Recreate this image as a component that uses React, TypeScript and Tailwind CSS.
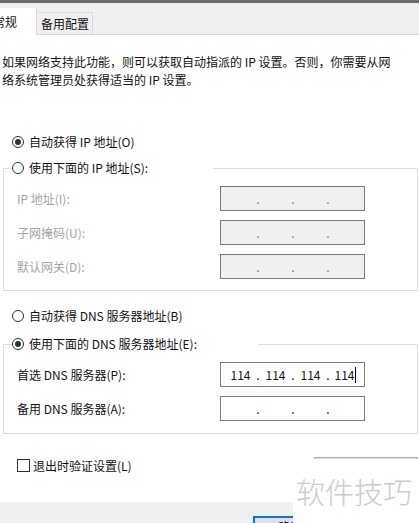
import React from "react";

const FONT = "font-['Noto_Sans_CJK_SC','Noto_Sans',sans-serif]";

function Radio({ checked }: { checked?: boolean }) {
  return (
    <svg width="12" height="12" viewBox="0 0 12 12" className="shrink-0">
      <circle cx="6" cy="6" r="5.5" fill="#fff" stroke="#333" strokeWidth="1" />
      {checked && <circle cx="6" cy="6" r="3" fill="#333" />}
    </svg>
  );
}

function RadioRow({ label, checked }: { label: string; checked?: boolean }) {
  return (
    <div className="flex items-center h-[20px] pl-[12px] gap-[5px]">
      <Radio checked={checked} />
      <span className="text-[12px] leading-[20px] text-[#111]">{label}</span>
    </div>
  );
}

// group box header: line — radio label — line
function GroupHead({ label, checked, wide }: { label: string; checked?: boolean; wide?: boolean }) {
  return (
    <div className="flex h-[20px]">
      <div className="w-[9px] mt-[10px] border-l border-t border-[#dcdcdc]" />
      <div className={`flex items-center gap-[5px] shrink-0 ${wide ? "w-[246px]" : "w-[201px]"}`}>
        <Radio checked={checked} />
        <span className="text-[12px] leading-[20px] text-[#111]">{label}</span>
      </div>
      <div className="flex-1 mt-[10px] border-r border-t border-[#dcdcdc]" />
    </div>
  );
}

function IpBox({ disabled, value }: { disabled?: boolean; value?: string[] }) {
  const cells = value ?? ["", "", "", ""];
  const dot = disabled ? "text-[#777]" : "text-[#111]";
  return (
    <div
      className={`w-[145px] h-[25px] border border-[#7a7a7a] flex items-center pl-[4px] text-[12px] leading-[20px] ${
        disabled ? "bg-[#f0f0f0]" : "bg-white"
      }`}
    >
      {cells.map((c, i) => (
        <React.Fragment key={i}>
          {i > 0 && <span className={`w-[4px] text-center ${dot}`}>.</span>}
          <span className="w-[31px] flex items-center justify-center text-[#111]">
            {c}
            {i === 3 && value && <span className="inline-block w-px h-[16px] bg-black ml-px" />}
          </span>
        </React.Fragment>
      ))}
    </div>
  );
}

function FieldRow({ label, disabled, value }: { label: string; disabled?: boolean; value?: string[] }) {
  return (
    <div className="flex items-center pl-[13px]">
      <span className={`w-[203px] shrink-0 text-[12px] leading-[20px] ${disabled ? "text-[#a3a3a3]" : "text-[#111]"}`}>
        {label}
      </span>
      <IpBox disabled={disabled} value={value} />
    </div>
  );
}

export default function App() {
  return (
    <div className={`relative w-[419px] h-[523px] overflow-hidden bg-white ${FONT}`}>
      <div className="h-[3px] bg-[#6b6b6b]" />

      {/* tabs */}
      <div className="flex items-end h-[32px] bg-[#f0f0f0]">
        <div className="w-[37px] h-[27px] bg-white border-r border-[#d9d9d9] flex items-center overflow-hidden">
          <span className="-ml-[7px] text-[12px] leading-[20px] text-[#111] whitespace-nowrap">常规</span>
        </div>
        <div className="w-[56px] h-[23px] bg-[#f0f0f0] border-t border-r border-b border-[#d9d9d9] flex items-center pl-[4px]">
          <span className="text-[12px] leading-[20px] text-[#111] whitespace-nowrap">备用配置</span>
        </div>
        <div className="flex-1 h-px bg-[#d9d9d9]" />
      </div>

      <p className="mt-[18px] pl-[2px] text-[12px] leading-[18px] text-[#111]">
        如果网络支持此功能，则可以获取自动指派的 IP 设置。否则，你需要从网
        <br />
        络系统管理员处获得适当的 IP 设置。
      </p>

      <div className="mt-[43px]">
        <RadioRow label="自动获得 IP 地址(O)" checked />
      </div>

      <div className="mt-[6px] ml-[3px] mr-[1px]">
        <GroupHead label="使用下面的 IP 地址(S):" />
        <div className="border-x border-b border-[#dcdcdc] pt-[8px] pb-[11px] flex flex-col gap-[9px]">
          <FieldRow label="IP 地址(I):" disabled />
          <FieldRow label="子网掩码(U):" disabled />
          <FieldRow label="默认网关(D):" disabled />
        </div>
      </div>

      <div className="mt-[15px]">
        <RadioRow label="自动获得 DNS 服务器地址(B)" />
      </div>

      <div className="mt-[8px] ml-[3px] mr-[1px]">
        <GroupHead label="使用下面的 DNS 服务器地址(E):" checked wide />
        <div className="border-x border-b border-[#dcdcdc] pt-[8px] pb-[12px] flex flex-col gap-[9px]">
          <FieldRow label="首选 DNS 服务器(P):" value={["114", "114", "114", "114"]} />
          <FieldRow label="备用 DNS 服务器(A):" />
        </div>
      </div>

      <div className="mt-[23px] flex justify-between items-start h-[23px] pl-[17px] pr-[1px]">
        <label className="mt-[2px] flex items-center gap-[3px]">
          <span className="w-[13px] h-[13px] border border-[#333] bg-white" />
          <span className="text-[12px] leading-[13px] text-[#111]">退出时验证设置(L)</span>
        </label>
        {/* "高级" button, mostly hidden under the watermark */}
        <div className="w-[104px] h-[23px] border border-[#adadad] bg-[#e1e1e1]" />
      </div>

      <div className="mt-[22px] h-[40px] bg-[#f0f0f0] pt-[11px] pl-[253px]">
        <button className="w-[75px] h-[23px] border border-[#0078d7] outline outline-1 outline-[#0078d7] -outline-offset-2 bg-[#e1e1e1] text-[12px] leading-[20px] text-[#111]">
          确定
        </button>
      </div>

      {/* watermark overlay */}
      <div className="absolute left-[293px] top-[459px] right-0 bottom-0 bg-white flex items-center pl-[3px]">
        <span className="text-[29px] leading-[40px] font-light text-[#cccccc] whitespace-nowrap">
          软件技巧
        </span>
      </div>
    </div>
  );
}
